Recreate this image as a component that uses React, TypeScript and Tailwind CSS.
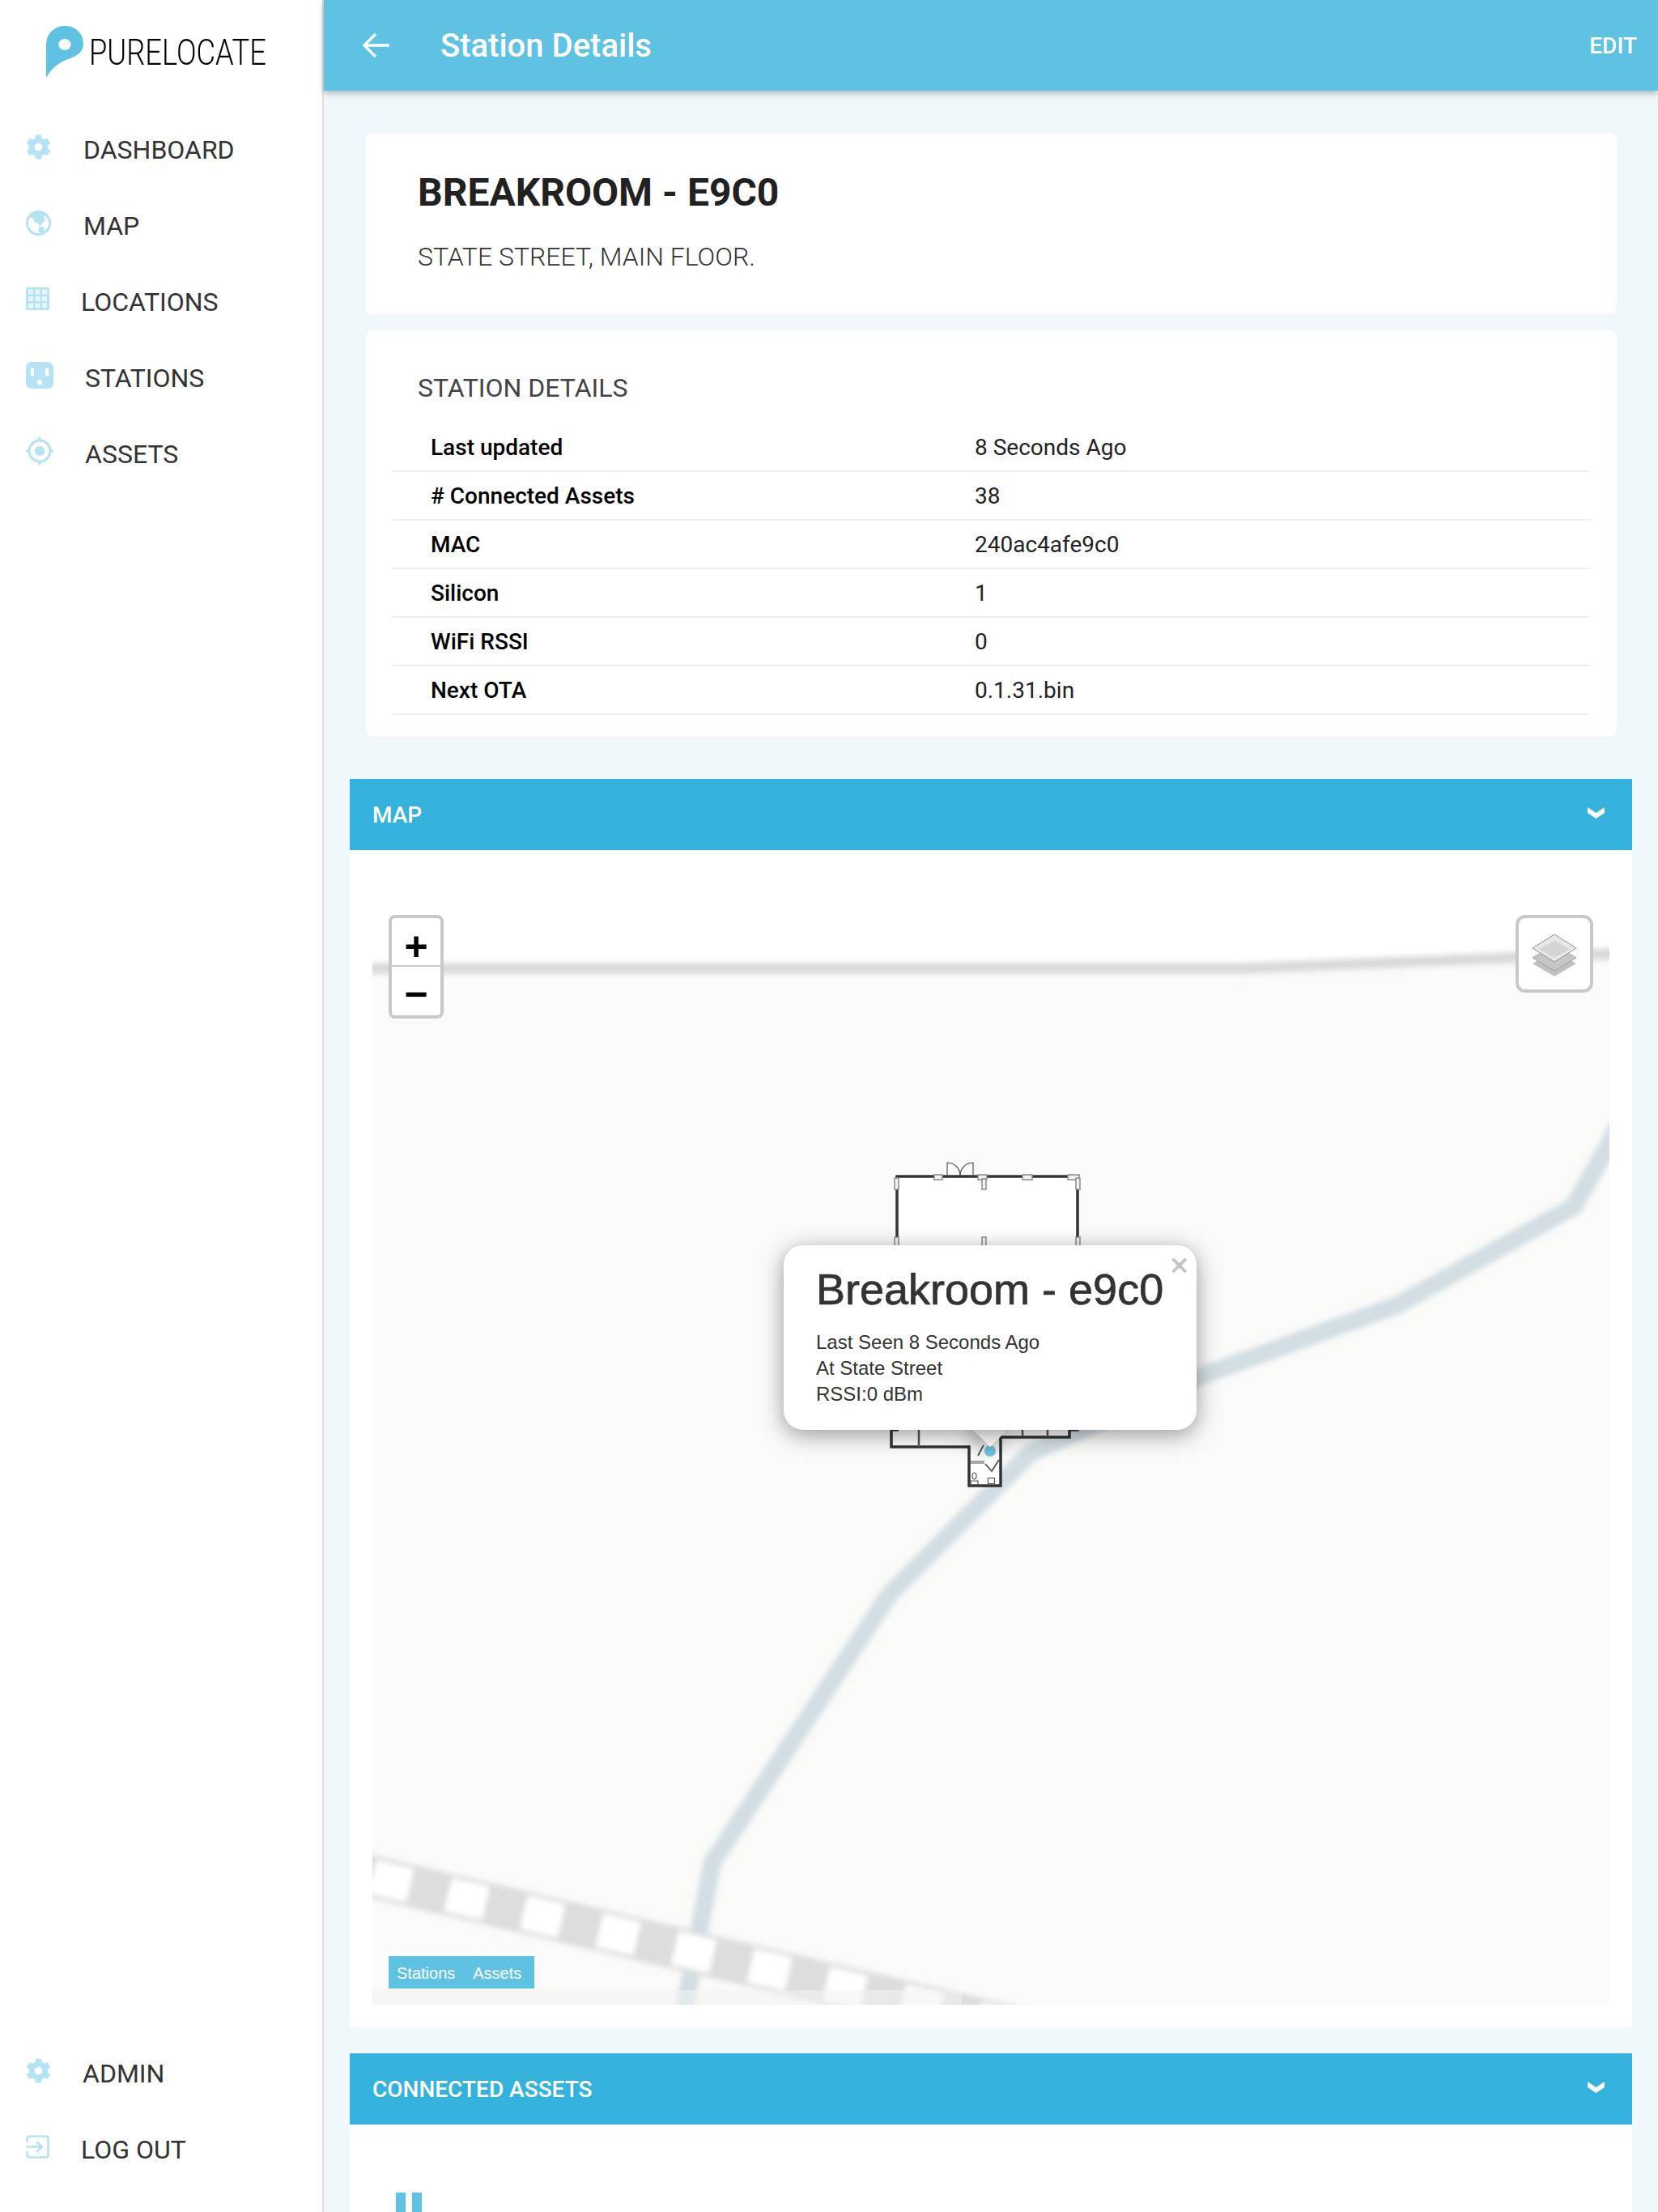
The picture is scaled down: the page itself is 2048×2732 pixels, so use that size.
import { FaCog } from "react-icons/fa"

const GlobeIcon = () => (
  <svg width="31" height="31" viewBox="0 0 31 31">
    <circle cx="15.500" cy="15.500" r="14" fill="#fff" stroke="#b5e3f3" strokeWidth="3" />
    <path d="M5 6.500L12 1h10l5.500 6-6 1 2.500 4-4 4-2 4-4-5-4-1-1-5-3 0z" fill="#b5e3f3" />
    <path d="M16 19.500l7 1.500-1 5-4 3-3-4 1-3z" fill="#b5e3f3" />
  </svg>
)

const GridIcon = () => (
  <svg width="29" height="28" viewBox="0 0 29 28">
    <rect width="29" height="28" rx="2.5" fill="#b5e3f3" />
    <g fill="#e6f6fb">
      <rect x="3" y="2.5" width="6" height="6" />
      <rect x="11.5" y="2.5" width="6" height="6" />
      <rect x="20" y="2.5" width="6" height="6" />
      <rect x="3" y="11" width="6" height="6" />
      <rect x="11.5" y="11" width="6" height="6" />
      <rect x="20" y="11" width="6" height="6" />
      <rect x="3" y="19.5" width="6" height="6" />
      <rect x="11.5" y="19.5" width="6" height="6" />
      <rect x="20" y="19.5" width="6" height="6" />
    </g>
  </svg>
)

const OutletIcon = () => (
  <svg width="34" height="33" viewBox="0 0 34 33">
    <rect width="34" height="33" rx="7" fill="#b5e3f3" />
    <rect x="6" y="7.5" width="4" height="10" rx="1.5" fill="#fff" />
    <rect x="24" y="7.5" width="4" height="10" rx="1.5" fill="#fff" />
    <path d="M14 28v-3a3 3 0 0 1 6 0v3z" fill="#fff" />
  </svg>
)

const TargetIcon = () => (
  <svg width="34" height="34" viewBox="0 0 34 34">
    <circle cx="17" cy="17" r="13" fill="none" stroke="#b5e3f3" strokeWidth="3.2" />
    <ellipse cx="17" cy="17" rx="6.5" ry="6" fill="#b5e3f3" />
    <path d="M17 0v4M17 30v4M0 17h4M30 17h4" stroke="#b5e3f3" strokeWidth="3.2" />
  </svg>
)

const LogOutIcon = () => (
  <svg width="29" height="29" viewBox="0 0 29 29" fill="none" stroke="#b5e3f3" strokeWidth="2.6">
    <path d="M1.5 9V4a2.5 2.5 0 0 1 2.5-2.5h21A2.5 2.5 0 0 1 27.5 4v21a2.5 2.5 0 0 1-2.5 2.5H4A2.5 2.5 0 0 1 1.5 25v-5" />
    <path d="M0 14.5h20M13 8l7 6.5-7 6.5" />
  </svg>
)

const PinLogo = () => (
  <svg width="46" height="64" viewBox="0 0 46 64">
    <path
      fillRule="evenodd"
      fill="#60c2e3"
      d="M0 64V24C0 10 10 0 23 0c13 0 23 9 23 22 0 10-8 15-16 18C18 44 8 50 0 64zM23 16c-4.200 0-7.500 3-7.500 7s3.300 7 7.500 7 7.500-3 7.500-7-3.300-7-7.500-7z"
    />
  </svg>
)

const Chevron = () => (
  <svg className="-mt-1" width="21" height="14" viewBox="0 0 21 14">
    <path d="M0 0l10.500 7L21 0v7l-10.500 7L0 7z" fill="#fff" />
  </svg>
)

const LayersIcon = () => (
  <svg className="mt-[3px]" width="54" height="52" viewBox="0 0 54 52">
    <path d="M27 20L54 36 27 52 0 36z" fill="#c0c0c0" />
    <path d="M27 13L54 29 27 45 0 29z" fill="#c6c6c6" stroke="#a0a0a0" strokeWidth="1" />
    <path d="M27 0L54 17 27 34 0 17z" fill="#e8e8e8" stroke="#8f8f8f" strokeWidth="1" />
    <path d="M27 8L46 18 27 29 8 18z" fill="#d4d4d4" />
  </svg>
)

const MapDrawing = () => (
  <svg className="block" width="1528" height="1366" viewBox="460 1110 1528 1366">
    <defs>
      <filter id="soft" filterUnits="userSpaceOnUse" x="300" y="1000" width="1800" height="1600">
        <feGaussianBlur stdDeviation="3" />
      </filter>
      <filter id="softer" filterUnits="userSpaceOnUse" x="300" y="1000" width="1800" height="1600">
        <feGaussianBlur stdDeviation="3.500" />
      </filter>
    </defs>
    <rect x="460" y="1110" width="1528" height="1366" fill="#fff" />
    <path d="M400 1196H1534L2040 1176V2500H400z" fill="#fafaf8" />
    <path d="M400 1196H1534L2040 1176" fill="none" stroke="#d8d8d8" strokeWidth="13" filter="url(#softer)" />
    <path
      d="M2010 1370L1988 1412L1944 1490L1726 1612L1482 1700L1272 1795L1098 1970L880 2300L863 2388L842 2500"
      fill="none"
      stroke="#d2dee4"
      strokeWidth="22"
      strokeLinejoin="round"
      filter="url(#soft)"
    />
    <g filter="url(#soft)" fill="none">
      <path d="M366.500 2296L1300 2515" stroke="#dddddd" strokeWidth="52" />
      <path d="M366.500 2296L1300 2515" stroke="#ffffff" strokeWidth="42" strokeDasharray="48 48" />
    </g>
    <rect x="460" y="2458" width="728" height="18" fill="#f2f2f0" opacity="0.55" />

    <path
      d="M1108 1453H1331V1766H1321V1775H1236V1835H1197V1787H1101V1766H1108z"
      fill="#fff"
      stroke="#333"
      strokeWidth="3.500"
    />
    <g fill="#f2f2f2" stroke="#8a8a8a" strokeWidth="1.500">
      <rect x="1154" y="1451" width="10" height="6" />
      <rect x="1208" y="1451" width="11" height="6" />
      <rect x="1263" y="1451" width="12" height="6" />
      <rect x="1319" y="1451" width="14" height="6" />
      <rect x="1213" y="1456" width="5" height="13" />
      <rect x="1213" y="1528" width="5" height="12" />
      <rect x="1105" y="1455" width="5" height="14" />
      <rect x="1105" y="1528" width="5" height="12" />
      <rect x="1329" y="1455" width="5" height="14" />
      <rect x="1329" y="1528" width="5" height="12" />
    </g>
    <g fill="none" stroke="#555" strokeWidth="1.200">
      <path d="M1170 1453V1436C1180 1436 1186 1444 1186 1452" />
      <path d="M1202 1453V1436C1192 1436 1186 1444 1186 1452" />
      <path d="M1135 1766V1787M1263 1766V1775M1294 1766V1775" strokeWidth="2.500" />
      <path d="M1198 1805H1216M1198 1807H1216" />
      <path d="M1234 1803L1225 1817L1217 1808" strokeWidth="1.800" />
      <path d="M1215 1785C1212 1790 1210 1794 1208 1798" strokeWidth="1.800" />
      <ellipse cx="1203.500" cy="1823" rx="2.500" ry="4" />
      <path d="M1199 1834V1829H1208V1834" />
      <rect x="1220.500" y="1825.500" width="8" height="7" />
    </g>
    <circle cx="1223" cy="1792" r="7" fill="#60c2e3" opacity="0.85" />
  </svg>
)

const navItems = [
  { label: "DASHBOARD", icon: <FaCog size={31} color="#b5e3f3" />, textClass: "ml-[1px]" },
  { label: "MAP", icon: <GlobeIcon />, textClass: "ml-[1px]" },
  { label: "LOCATIONS", icon: <GridIcon />, textClass: "-ml-[2px]" },
  { label: "STATIONS", icon: <OutletIcon />, textClass: "ml-[3px]" },
  { label: "ASSETS", icon: <TargetIcon />, textClass: "ml-[3px]" },
]

const bottomItems = [
  { label: "ADMIN", icon: <FaCog size={31} color="#b5e3f3" />, textClass: "ml-0" },
  { label: "LOG OUT", icon: <LogOutIcon />, textClass: "-ml-[2px]" },
]

const details = [
  ["Last updated", "8 Seconds Ago"],
  ["# Connected Assets", "38"],
  ["MAC", "240ac4afe9c0"],
  ["Silicon", "1"],
  ["WiFi RSSI", "0"],
  ["Next OTA", "0.1.31.bin"],
]

const NavRow = ({ item }: { item: (typeof navItems)[number] }) => (
  <div className="flex h-[94px] items-center pl-8">
    <div className="-mt-2 flex w-[70px] shrink-0">{item.icon}</div>
    <span className={`${item.textClass} text-[32px] leading-10 text-[#333]`}>{item.label}</span>
  </div>
)

const PanelHeader = ({ title }: { title: string }) => (
  <div className="flex h-[88px] items-center justify-between bg-[#35b2db] pr-[34px] pl-7">
    <span className="pt-[2px] text-[28px] font-medium text-white">{title}</span>
    <Chevron />
  </div>
)

export default function App() {
  return (
    <div className="flex h-[2732px] w-[2048px] overflow-hidden bg-[#eff7fa] font-['Roboto',sans-serif]">
      <aside className="flex w-[400px] shrink-0 flex-col justify-between border-r-2 border-[#dbe1e4] bg-white">
        <div>
          <div className="flex h-[138px] items-start pt-8 pl-[57px]">
            <PinLogo />
            <span className="mt-[5px] ml-[7px] origin-left scale-x-[0.825] text-[44px] leading-[56px] font-light whitespace-nowrap text-black">
              PURELOCATE
            </span>
          </div>
          {navItems.map((item) => (
            <NavRow key={item.label} item={item} />
          ))}
        </div>
        <div className="pb-[30px]">
          {bottomItems.map((item) => (
            <NavRow key={item.label} item={item} />
          ))}
        </div>
      </aside>

      <main className="flex min-w-0 flex-1 flex-col">
        <header className="relative flex h-[112px] shrink-0 items-center justify-between bg-[#60c2e3] pr-[26px] pl-[47px] shadow-[0_3px_8px_rgba(0,0,0,0.28)]">
          <div className="flex items-center">
            <svg width="35" height="32" viewBox="0 0 35 32" fill="none" stroke="#fff" strokeWidth="3.400">
              <path d="M34 16H3M17 2L3 16l14 14" />
            </svg>
            <h1 className="ml-[62px] pt-[2px] text-[40px] font-medium text-white">Station Details</h1>
          </div>
          <span className="pt-[2px] text-[28px] font-medium text-white">EDIT</span>
        </header>

        <section className="mt-[52px] mr-[51px] ml-[52px] h-[224px] shrink-0 rounded-lg bg-white pt-[46px] pl-16">
          <h2 className="text-[48px] leading-[56px] font-bold text-[#212121]">BREAKROOM - E9C0</h2>
          <p className="mt-[31px] text-[32px] leading-10 font-light text-[#333]">STATE STREET, MAIN FLOOR.</p>
        </section>

        <section className="mt-5 mr-[51px] ml-[52px] h-[502px] shrink-0 rounded-lg bg-white pt-[51px]">
          <h3 className="pl-16 text-[32px] leading-10 text-[#444]">STATION DETAILS</h3>
          <div className="mt-6 mr-[33px] ml-8">
            {details.map(([label, value]) => (
              <div key={label} className="flex h-[60px] items-center border-b-2 border-[#eeeeee] pt-[2px] pl-12 text-[28px]">
                <span className="w-[672px] font-medium text-black">{label}</span>
                <span className="text-[#222]">{value}</span>
              </div>
            ))}
          </div>
        </section>

        <section className="mx-8 mt-[52px] shrink-0">
          <PanelHeader title="MAP" />
          <div className="bg-white px-7 pt-[60px] pb-7">
            <div className="relative h-[1366px] w-[1528px] overflow-hidden">
              <MapDrawing />

              <div className="absolute top-5 left-5 flex h-[128px] w-[68px] flex-col rounded-lg border-4 border-[#c8c8c8] bg-white font-['Liberation_Sans',sans-serif] text-[50px] leading-none font-bold text-black">
                <span className="flex h-[60px] items-center justify-center border-b-2 border-[#c8c8c8] pt-[11px]">+</span>
                <span className="flex flex-1 items-center justify-center pt-[7px]">−</span>
              </div>

              <div className="absolute top-5 right-5 flex size-[96px] items-center justify-center rounded-xl border-4 border-[#c8c8c8] bg-white">
                <LayersIcon />
              </div>

              <div className="absolute top-[428px] left-[508px] h-[228px] w-[510px] font-['Liberation_Sans',sans-serif] text-[#333]">
                <div className="absolute top-[213px] left-[240px] size-[30px] rotate-45 bg-white shadow-[0_6px_28px_rgba(0,0,0,0.4)]" />
                <div className="relative h-full rounded-3xl bg-white pt-[22px] pl-[40px] shadow-[0_6px_28px_rgba(0,0,0,0.4)]">
                  <span className="absolute top-[4px] right-[8px] font-['DejaVu_Sans',sans-serif] text-[32px] leading-10 font-bold text-[#c3c3c3]">
                    ×
                  </span>
                  <div className="text-[54px] leading-[64px] whitespace-nowrap [-webkit-text-stroke:0.7px_#333]">
                    Breakroom - e9c0
                  </div>
                  <div className="mt-[18px] text-2xl leading-8">
                    <div>Last Seen 8 Seconds Ago</div>
                    <div>At State Street</div>
                    <div>RSSI:0 dBm</div>
                  </div>
                </div>
              </div>

              <div className="absolute bottom-5 left-5 flex h-10 w-[180px] items-center gap-[22px] bg-[#60c2e3] pt-[2px] pl-[10px] font-['Liberation_Sans',sans-serif] text-xl text-white">
                <span>Stations</span>
                <span>Assets</span>
              </div>
            </div>
          </div>
        </section>

        <section className="mx-8 mt-8 shrink-0">
          <PanelHeader title="CONNECTED ASSETS" />
          <div className="flex h-[300px] gap-2 bg-white pt-[84px] pl-[57px]">
            <div className="h-[60px] w-3 bg-[#60c2e3]" />
            <div className="h-[60px] w-3 bg-[#60c2e3]" />
          </div>
        </section>
      </main>
    </div>
  )
}
